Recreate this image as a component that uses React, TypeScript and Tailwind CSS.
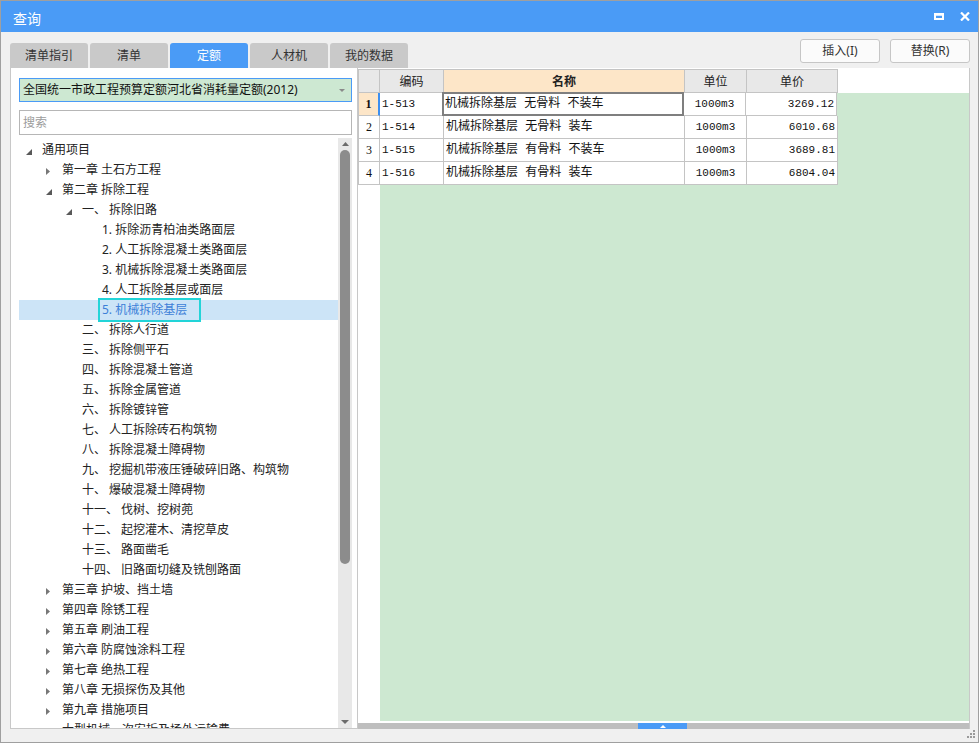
import React from "react";

type TreeNode = { t: string; l: number; a?: "open" | "closed"; sel?: boolean };

const tree: TreeNode[] = [
  { t: "通用项目", l: 0, a: "open" },
  { t: "第一章 土石方工程", l: 1, a: "closed" },
  { t: "第二章 拆除工程", l: 1, a: "open" },
  { t: "一、 拆除旧路", l: 2, a: "open" },
  { t: "1. 拆除沥青柏油类路面层", l: 3 },
  { t: "2. 人工拆除混凝土类路面层", l: 3 },
  { t: "3. 机械拆除混凝土类路面层", l: 3 },
  { t: "4. 人工拆除基层或面层", l: 3 },
  { t: "5. 机械拆除基层", l: 3, sel: true },
  { t: "二、 拆除人行道", l: 2 },
  { t: "三、 拆除侧平石", l: 2 },
  { t: "四、 拆除混凝土管道", l: 2 },
  { t: "五、 拆除金属管道", l: 2 },
  { t: "六、 拆除镀锌管", l: 2 },
  { t: "七、 人工拆除砖石构筑物", l: 2 },
  { t: "八、 拆除混凝土障碍物", l: 2 },
  { t: "九、 挖掘机带液压锤破碎旧路、构筑物", l: 2 },
  { t: "十、 爆破混凝土障碍物", l: 2 },
  { t: "十一、 伐树、挖树蔸", l: 2 },
  { t: "十二、 起挖灌木、清挖草皮", l: 2 },
  { t: "十三、 路面凿毛", l: 2 },
  { t: "十四、 旧路面切缝及铣刨路面", l: 2 },
  { t: "第三章 护坡、挡土墙", l: 1, a: "closed" },
  { t: "第四章 除锈工程", l: 1, a: "closed" },
  { t: "第五章 刷油工程", l: 1, a: "closed" },
  { t: "第六章 防腐蚀涂料工程", l: 1, a: "closed" },
  { t: "第七章 绝热工程", l: 1, a: "closed" },
  { t: "第八章 无损探伤及其他", l: 1, a: "closed" },
  { t: "第九章 措施项目", l: 1, a: "closed" },
  { t: "大型机械一次安拆及场外运输费", l: 1, a: "closed" },
];

const rows = [
  ["1-513", "机械拆除基层 无骨料 不装车", "1000m3", "3269.12"],
  ["1-514", "机械拆除基层 无骨料 装车", "1000m3", "6010.68"],
  ["1-515", "机械拆除基层 有骨料 不装车", "1000m3", "3689.81"],
  ["1-516", "机械拆除基层 有骨料 装车", "1000m3", "6804.04"],
];

const tabs = ["清单指引", "清单", "定额", "人材机", "我的数据"];

const indent = ["pl-[3px]", "pl-[23px]", "pl-[43px]", "pl-[63px]"];

function Arrow({ a }: { a?: "open" | "closed" }) {
  return (
    <span className="w-[20px] h-full flex items-center shrink-0 pl-[4px]">
      {a === "open" && (
        <svg width="6" height="6" viewBox="0 0 6 6" className="mt-[4px]">
          <path d="M6 0V6H0Z" fill="#595959" />
        </svg>
      )}
      {a === "closed" && (
        <svg width="4" height="7" viewBox="0 0 4 7" className="mt-[2px]">
          <path d="M0 0L4 3.5L0 7Z" fill="#777" />
        </svg>
      )}
    </span>
  );
}

function TreeRow({ n }: { n: TreeNode }) {
  return (
    <div className={`h-[20px] flex items-center shrink-0 ${indent[n.l]} ${n.sel ? "bg-[#cce4f7]" : ""}`}>
      <Arrow a={n.a} />
      {n.sel ? (
        <span className="h-[24px] -ml-[4px] px-[2px] pr-[12px] border-2 border-[#22d4d8] flex items-center text-[#3c7fd8] whitespace-nowrap">
          {n.t}
        </span>
      ) : (
        <span className="whitespace-nowrap text-[#222]">{n.t}</span>
      )}
    </div>
  );
}

export default function App() {
  const cell = "border-r border-b border-[#c4c4c4] h-full flex items-center shrink-0";
  return (
    <div className="w-[979px] h-[743px] flex flex-col bg-[#f0f0f0] border border-[#9f9f9f] font-['Noto_Sans','Noto_Sans_CJK_SC',sans-serif] text-[12px] overflow-hidden">
      {/* title bar */}
      <div className="h-[31px] shrink-0 bg-[#4a9bf6] flex items-center justify-between pl-[12px] pr-[8px] text-white">
        <span className="text-[14px] pt-[3px]">查询</span>
        <div className="flex items-center gap-[16px]">
          <svg width="10" height="7" viewBox="0 0 10 7">
            <rect x="1" y="1.5" width="8" height="4.5" fill="none" stroke="#fff" strokeWidth="2" />
            <rect x="0" y="0" width="10" height="2.5" fill="#fff" />
          </svg>
          <svg width="10" height="9" viewBox="0 0 10 9">
            <path d="M1 0.5L9 8.5M9 0.5L1 8.5" stroke="#fff" strokeWidth="2.2" />
          </svg>
        </div>
      </div>

      {/* tab row */}
      <div className="h-[36px] shrink-0 flex justify-between pl-[9px] pr-[8px]">
        <div className="flex items-end gap-[2px]">
          {tabs.map((t) => (
            <div
              key={t}
              className={`w-[78px] h-[25px] rounded-t-[3px] flex items-center justify-center ${
                t === "定额" ? "bg-[#4a9bf6] text-white" : "bg-[#c9c9c9] text-[#333]"
              }`}
            >
              {t}
            </div>
          ))}
        </div>
        <div className="flex gap-[10px] pt-[7px]">
          {["插入(I)", "替换(R)"].map((b) => (
            <div
              key={b}
              className="w-[80px] h-[24px] border border-[#c6c6c6] rounded-[3px] bg-[#fbfbfb] flex items-center justify-center text-[#333]"
            >
              {b}
            </div>
          ))}
        </div>
      </div>

      {/* main */}
      <div className="h-[661px] shrink-0 flex pl-[9px]">
        {/* left panel */}
        <div className="w-[348px] h-full bg-white border-l border-r border-b border-[#c8c8c8] flex flex-col pt-[10px] pl-[8px] pr-[5px]">
          <div className="h-[24px] shrink-0 bg-[#cde8d2] border border-[#4a9bf6] flex items-center justify-between pl-[3px] pr-[6px] text-[#111]">
            <span>全国统一市政工程预算定额河北省消耗量定额(2012)</span>
            <svg width="6" height="3" viewBox="0 0 6 3">
              <path d="M0 0H6L3 3Z" fill="#8a8a8a" />
            </svg>
          </div>
          <div className="h-[25px] shrink-0 mt-[8px] border border-[#b6b6b6] flex items-center pl-[3px] text-[#9c9c9c]">
            搜索
          </div>
          <div className="flex-1 min-h-0 mt-[3px] flex">
            <div className="flex-1 min-w-0 flex flex-col overflow-hidden pt-[2px]">
              {tree.map((n) => (
                <TreeRow key={n.t} n={n} />
              ))}
            </div>
            <div className="w-[14px] bg-[#e8e8e8] flex flex-col items-center">
              <svg width="7" height="4" viewBox="0 0 7 4" className="mt-[4px]">
                <path d="M0 4L3.5 0L7 4Z" fill="#6b6b6b" />
              </svg>
              <div className="w-[10px] h-[414px] mt-[4px] rounded-full bg-[#8c8c8c]" />
              <div className="flex-1" />
              <svg width="8" height="4" viewBox="0 0 8 4" className="mb-[4px]">
                <path d="M0 0H8L4 4Z" fill="#6b6b6b" />
              </svg>
            </div>
          </div>
        </div>

        {/* right panel */}
        <div className="w-[612px] h-full bg-white border-r border-[#c8c8c8] flex flex-col pt-[1px]">
          {/* header */}
          <div className="h-[24px] shrink-0 flex">
            <div className="flex h-full border-l border-t border-[#c4c4c4] bg-[#e8e8e8] text-[#222] font-['Noto_Sans_CJK_SC',sans-serif]">
              <div className={`${cell} w-[21px]`} />
              <div className={`${cell} w-[64px] justify-center`}>编码</div>
              <div className={`${cell} w-[241px] justify-center bg-[#fde6c8] font-bold`}>名称</div>
              <div className={`${cell} w-[62px] justify-center`}>单位</div>
              <div className={`${cell} w-[91px] justify-center`}>单价</div>
            </div>
            <div className="flex-1" />
          </div>

          {/* body */}
          <div className="flex-1 min-h-0 flex flex-col bg-[#cde8d1]">
            {rows.map((r, i) => (
              <div key={r[0]} className="h-[23px] shrink-0 flex">
                <div className="flex h-full border-l border-[#c4c4c4] bg-white text-[#111]">
                  <div
                    className={`${cell} w-[21px] justify-center font-['Liberation_Serif',serif] ${
                      i === 0 ? "bg-[#fde6c8] font-bold border-r-2 border-r-[#3d8ff0]" : ""
                    }`}
                  >
                    {i + 1}
                  </div>
                  <div className={`${cell} ${i === 0 ? "w-[63px]" : "w-[64px]"} pl-[2px] font-['Liberation_Mono',monospace] text-[11px]`}>
                    {r[0]}
                  </div>
                  <div className={`${cell} w-[241px] pl-[2px] relative font-['Liberation_Mono','Noto_Sans_CJK_SC',monospace] whitespace-pre`}>
                    {r[1]}
                    {i === 0 && (
                      <div className="absolute -left-[1px] -top-[1px] -right-[1px] -bottom-[1px] border-2 border-[#7f7f7f] pointer-events-none" />
                    )}
                  </div>
                  <div className={`${cell} w-[62px] justify-center font-['Liberation_Mono',monospace] text-[11px]`}>{r[2]}</div>
                  <div className={`${cell} w-[91px] justify-end pr-[2px] font-['Liberation_Mono',monospace] text-[11px]`}>{r[3]}</div>
                </div>
              </div>
            ))}
            <div className="flex-1 flex">
              <div className="w-[22px] bg-white" />
            </div>
          </div>
          <div className="h-[2px] shrink-0 bg-white" />
          <div className="h-[6px] shrink-0 bg-[#bebebe] flex">
            <div className="ml-[280px] w-[49px] h-full bg-[#4a9bf6] flex items-end justify-center pb-[1px]">
              <svg width="6" height="3" viewBox="0 0 6 3">
                <path d="M0 3L3 0L6 3Z" fill="#fff" />
              </svg>
            </div>
          </div>
        </div>
      </div>

      {/* bottom strip with resize grip */}
      <div className="flex-1 flex justify-end items-start pt-[1px] pr-[2px]">
        <svg width="9" height="9" viewBox="0 0 9 9">
          <rect x="6" y="0" width="2" height="2" fill="#9a9a9a" />
          <rect x="3" y="3" width="2" height="2" fill="#9a9a9a" />
          <rect x="6" y="3" width="2" height="2" fill="#9a9a9a" />
          <rect x="0" y="6" width="2" height="2" fill="#9a9a9a" />
          <rect x="3" y="6" width="2" height="2" fill="#9a9a9a" />
          <rect x="6" y="6" width="2" height="2" fill="#9a9a9a" />
        </svg>
      </div>
    </div>
  );
}
